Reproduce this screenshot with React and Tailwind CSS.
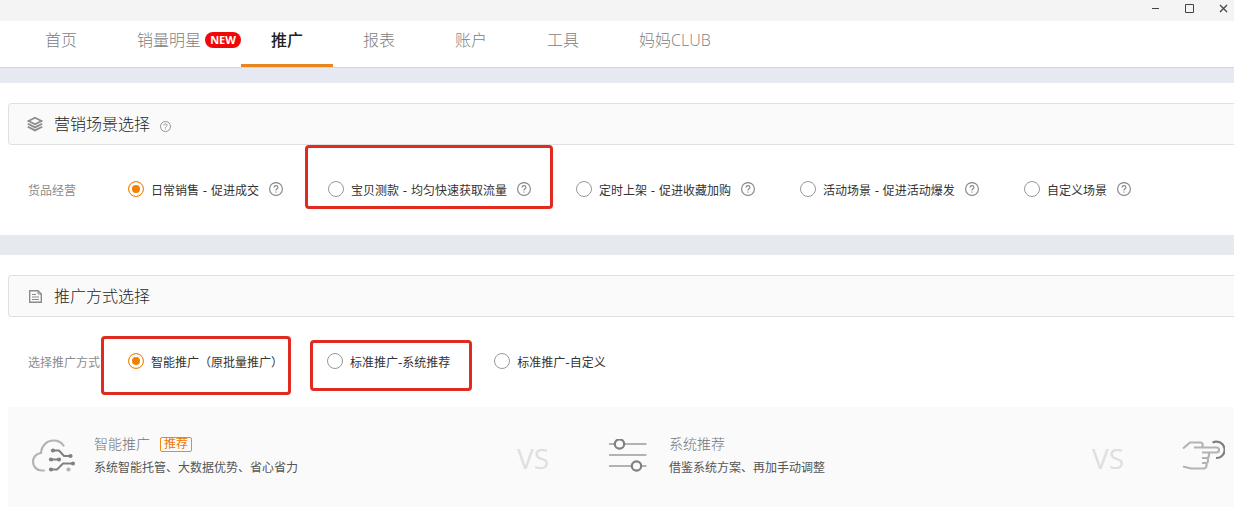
import React, { useState } from "react";
import clsx from "clsx";


const tabs = [
  { name: "首页", path: "#home" },
  { name: "销量明星", path: "#star", isNew: true },
  { name: "推广", path: "#promote", active: true },
  { name: "报表", path: "#report" },
  { name: "账户", path: "#account" },
  { name: "工具", path: "#tools" },
  { name: "妈妈CLUB", path: "#club" },
];

const scenes = [
  { value: "daily", label: "日常销售 - 促进成交", help: true },
  {
    value: "test",
    label: "宝贝测款 - 均匀快速获取流量",
    help: true,
    mark: "-top-9 -bottom-3 -left-[23px] -right-[22px]",
  },
  { value: "timed", label: "定时上架 - 促进收藏加购", help: true },
  { value: "event", label: "活动场景 - 促进活动爆发", help: true },
  { value: "custom", label: "自定义场景", help: true },
];

const methods = [
  {
    value: "smart",
    label: "智能推广（原批量推广）",
    mark: "-top-[17px] -bottom-[26px] -left-[27px] -right-2",
  },
  {
    value: "system",
    label: "标准推广-系统推荐",
    mark: "-top-[13px] -bottom-[22px] -left-[17px] -right-[22px]",
  },
  { value: "manual", label: "标准推广-自定义" },
];


const HelpIcon = ({ className }) => (
  <svg viewBox="0 0 14 14" fill="none" stroke="#858585" strokeWidth="1.1" className={className}>
    <circle cx="7" cy="7" r="6.4" />
    <path d="M5 5.6C5 4.3 5.8 3.6 7 3.6s2 .7 2 1.8c0 1.3-2 1.4-2 3" />
    <path d="M7 9.6v1.2" />
  </svg>
);

const LayersIcon = () => (
  <svg viewBox="0 0 16 16" fill="none" stroke="#8c8c8c" strokeWidth="1.8" className="size-4">
    <path d="M8 1.8 14.5 5 8 8.200 1.500 5z" />
    <path d="M.8 7.800 8 11.400 15.200 7.800" />
    <path d="M.8 10.800 8 14.400 15.200 10.800" />
  </svg>
);

const DocIcon = () => (
  <svg viewBox="0 0 16 16" fill="none" stroke="#8c8c8c" strokeWidth="1.4" className="size-4">
    <path d="M11 2.700H2.700v11.600h11.600V6z" />
    <path d="M11 2.700v3.300h3.300" strokeWidth="1" />
    <path d="M5 6.500h4M5 9h7M5 11.500h7" strokeWidth="1.1" />
  </svg>
);

const CloudIcon = () => (
  <svg viewBox="0 0 43 34" fill="none" strokeLinecap="round" className="w-[43px]">
    <path
      d="M12 31.5H9.5C4.800 31.500 1 27.500 1 22.500 1 18 4.500 14.500 9 14 9.500 6.500 15 1.500 21.500 1.500 26 1.500 29.500 3.500 31.500 6.500"
      stroke="#b3b3b3"
      strokeWidth="2.200"
    />
    <g stroke="#808080" strokeWidth="2">
      <path d="M21 11.500H27L32 17H38" />
      <path d="M19 20.500H27" />
      <path d="M19 30.500H25L31 24.500H41" />
    </g>
    <g fill="#808080">
      <circle cx="21" cy="11.5" r="2.100" />
      <circle cx="38.500" cy="17" r="2.100" />
      <circle cx="19" cy="20.500" r="2.100" />
      <circle cx="27" cy="20.500" r="2.100" />
      <circle cx="19" cy="30.500" r="2.100" />
      <circle cx="41" cy="24.500" r="2" />
      <circle cx="36.500" cy="30.500" r="2.100" fill="#b3b3b3" />
    </g>
  </svg>
);

const SlidersIcon = () => (
  <svg viewBox="0 0 43 34" fill="none" className="w-[43px]">
    <path d="M2 5H39.500M2 16H39.500M2 27H39.500" stroke="#b3b3b3" strokeWidth="2.200" />
    <circle cx="12.500" cy="5" r="4.700" fill="#fafafa" stroke="#808080" strokeWidth="2.200" />
    <circle cx="29.500" cy="27" r="4.700" fill="#fafafa" stroke="#808080" strokeWidth="2.200" />
  </svg>
);

const HandIcon = () => (
  <svg viewBox="0 0 43 34" fill="none" strokeWidth="2.200" strokeLinejoin="round" className="w-[43px]">
    <g stroke="#b3b3b3">
      <path d="M1 9.500 8 3.500H18.500C20.500 3.500 21 5 20.500 8.500" />
      <path d="M12 8.500H34.500A2.500 2.500 0 0 1 34.500 13.500H20" />
      <path d="M27 13.500V15.500C27 17.500 26.500 19 25 19H20M25.500 19C26.500 21 26 24 24.500 24H20M24.500 24C25 27 24 29.500 22 29.500H9L1 27.500" />
    </g>
    <path d="M30.500 3.600A8.200 8.200 0 1 1 34 19" stroke="#808080" />
  </svg>
);


const Option = ({ name, item, checked, onChange }) => (
  <div className="relative flex h-4 shrink-0 items-center gap-[10px]">
    <label className="flex items-center gap-[7px] whitespace-nowrap text-xs text-[#333]">
      <input
        type="radio"
        name={name}
        value={item.value}
        checked={checked}
        onChange={onChange}
        className="size-4 appearance-none rounded-full border border-[#999] bg-white checked:border-[#ef8b16] checked:bg-[#f08200] checked:shadow-[inset_0_0_0_3px_#fff]"
      />
      <span className="pt-1">{item.label}</span>
    </label>

    {item.help && <HelpIcon className="size-[14px]" />}

    {item.mark && (
      <span
        className={clsx(
          "pointer-events-none absolute rounded-[4px] border-3 border-[#e12a20]",
          item.mark
        )}
      />
    )}
  </div>
);


const SectionHead = ({ icon, title, help }) => (
  <div className="ml-2 flex h-[42px] items-center rounded-l-[4px] border border-r-0 border-[#e0e0e0] bg-[#fafafa] pl-[18px]">
    {icon}
    <h2 className="ml-[11px] pt-0.5 text-base font-light text-[#1f1f1f]">{title}</h2>
    {help && <HelpIcon className="mt-1 ml-[10px] size-[11px]" />}
  </div>
);


const CompareItem = ({ icon, title, tag, desc, vs }) => (
  <div className="flex w-[575px] shrink-0 items-center pr-[34px] pb-[2px] pl-6">
    {icon}

    {title && (
      <div className="ml-[19px]">
        <div className="flex h-5 items-center gap-[10px]">
          <h3 className="text-sm font-light text-[#737373]">{title}</h3>
          {tag && (
            <span className="rounded-[2px] border border-[#ef8b16] px-[3px] text-xs leading-[13px] text-[#f07800]">
              {tag}
            </span>
          )}
        </div>
        <p className="pt-1 text-xs leading-5 text-[#555]">{desc}</p>
      </div>
    )}

    {vs && (
      <span className="ml-auto pt-1 font-['Open_Sans'] text-[28px] text-[#dfdfdf]">
        VS
      </span>
    )}
  </div>
);


const App = () => {

  const [scene, setScene] = useState("daily");
  const [method, setMethod] = useState("smart");

  return (
    <div className="min-h-screen overflow-hidden bg-white font-['DejaVu_Sans','Noto_Sans_CJK_SC',sans-serif]">

      {/* WINDOW BAR */}

      <div className="flex h-[21px] items-start justify-end gap-[25px] bg-[#f4f4f4] pt-1 pr-[6px]">
        <button aria-label="最小化">
          <svg viewBox="0 0 9 9" stroke="#444" className="size-[9px]">
            <path d="M1 4.500H8" />
          </svg>
        </button>
        <button aria-label="最大化">
          <svg viewBox="0 0 9 9" fill="none" stroke="#444" className="size-[9px]">
            <path d="M.5.500H8.500V8.500H.5z" />
          </svg>
        </button>
        <button aria-label="关闭">
          <svg viewBox="0 0 9 9" stroke="#444" strokeWidth="1.300" className="size-[9px]">
            <path d="M1 1 8 8M8 1 1 8" />
          </svg>
        </button>
      </div>


      {/* TABS */}

      <nav className="flex h-[46px] pl-[15px] font-['Open_Sans','Noto_Sans_CJK_SC',sans-serif]">
        {tabs.map((tab) => (
          <a
            key={tab.name}
            href={tab.path}
            className={clsx(
              "flex items-center gap-1 border-b-3 pb-[5px] pl-[30px] text-base whitespace-nowrap",
              tab.isNew ? "pr-0" : "pr-[30px]",
              tab.active
                ? "border-[#e8851c] font-medium text-[#222]"
                : "border-transparent font-light text-[#808080]"
            )}
          >
            {tab.name}
            {tab.isNew && (
              <span className="w-9 rounded-full bg-[#f00808] text-center text-[11px] leading-4 font-bold text-white">
                NEW
              </span>
            )}
          </a>
        ))}
      </nav>

      <div className="h-4 border-t border-[#d4d6de] bg-[#e7e9f2]" />


      {/* SCENE */}

      <section className="pt-5">
        <SectionHead icon={<LayersIcon />} title="营销场景选择" help />

        <div className="flex h-[90px] items-center pb-[2px] pl-7">
          <span className="w-[100px] shrink-0 pt-1 text-xs text-[#8c8c8c]">货品经营</span>
          <div className="flex gap-[45px]">
            {scenes.map((item) => (
              <Option
                key={item.value}
                name="scene"
                item={item}
                checked={scene === item.value}
                onChange={() => setScene(item.value)}
              />
            ))}
          </div>
        </div>
      </section>

      <div className="h-5 bg-[#e6eaef]" />


      {/* METHOD */}

      <section className="pt-5">
        <SectionHead icon={<DocIcon />} title="推广方式选择" />

        <div className="flex h-[90px] items-center pb-[2px] pl-7">
          <span className="w-[100px] shrink-0 pt-1 text-xs text-[#8c8c8c]">选择推广方式</span>
          <div className="flex gap-[44px]">
            {methods.map((item) => (
              <Option
                key={item.value}
                name="method"
                item={item}
                checked={method === item.value}
                onChange={() => setMethod(item.value)}
              />
            ))}
          </div>
        </div>

        <div className="ml-2 flex h-[100px] overflow-hidden bg-[#fafafa]">
          <CompareItem
            icon={<CloudIcon />}
            title="智能推广"
            tag="推荐"
            desc="系统智能托管、大数据优势、省心省力"
            vs
          />
          <CompareItem
            icon={<SlidersIcon />}
            title="系统推荐"
            desc="借鉴系统方案、再加手动调整"
            vs
          />
          <CompareItem icon={<HandIcon />} />
        </div>
      </section>

    </div>
  );
};


export default App;
